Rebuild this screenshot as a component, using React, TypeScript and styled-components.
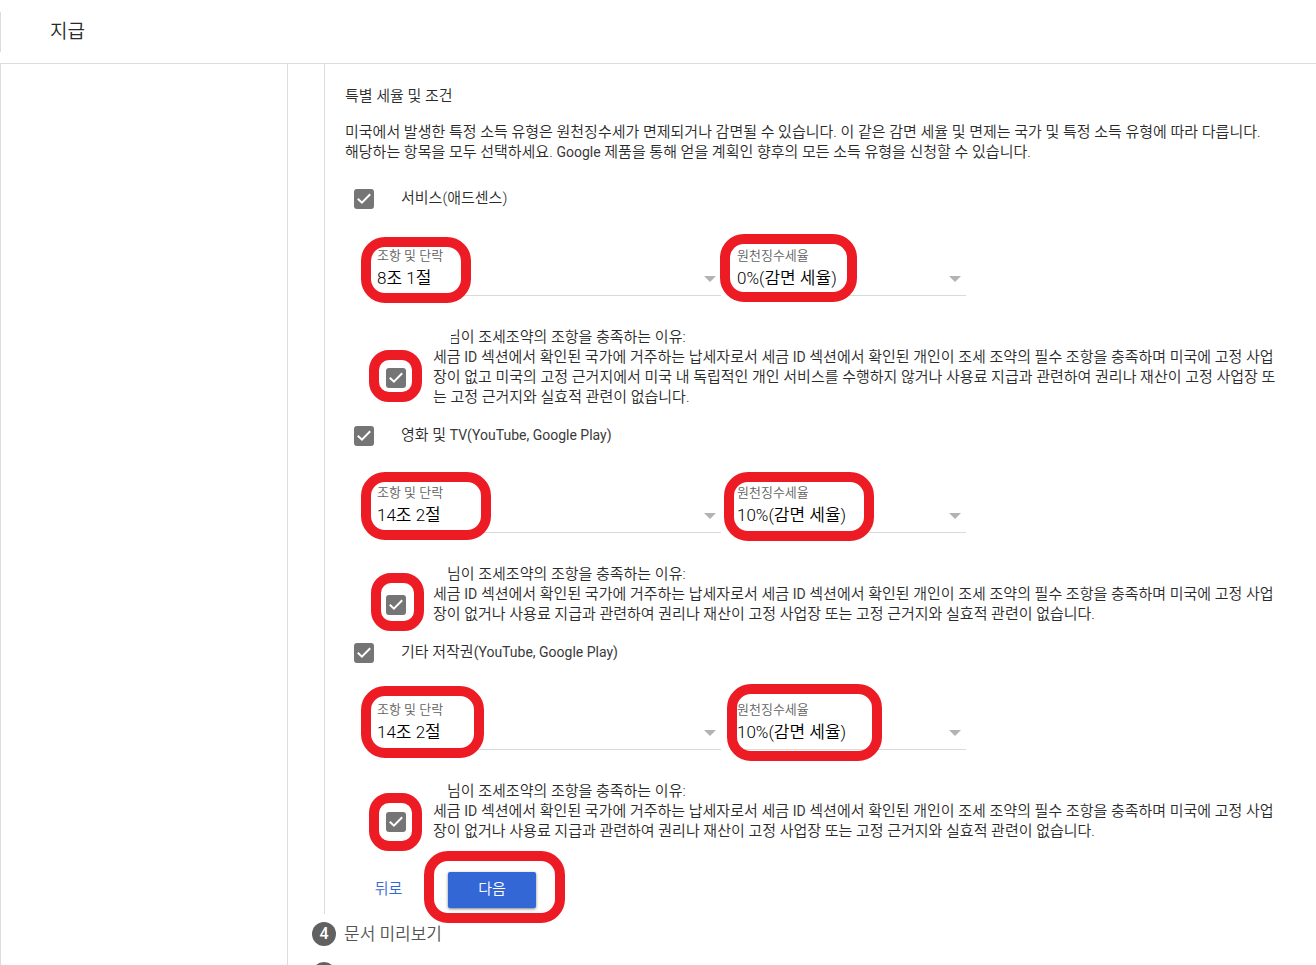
import React, { useId } from "react";
import styled, { createGlobalStyle } from "styled-components";

const GlobalStyle = createGlobalStyle`
  *, *::before, *::after { box-sizing: border-box; }
  body {
    margin: 0;
    background: #fff;
    color: #2a2a2a;
    font-family: Roboto, "Noto Sans CJK KR", sans-serif;
    font-size: 15px;
    line-height: 20px;
    font-weight: 350;
  }
  button, select, input { font-family: inherit; font-weight: inherit; margin: 0; }
`;

const Page = styled.div`
  display: flex;
  flex-direction: column;
  height: 100vh;
  overflow: hidden;
`;

const Header = styled.header`
  flex: none;
  padding: 12px 0 11px;
  border-bottom: 1px solid #dadce0;
`;

const PageTitle = styled.h1`
  margin: 0;
  padding-left: 49px;
  border-left: 1px solid #dadce0;
  font-size: 19px;
  font-weight: inherit;
  line-height: 40px;
`;

const Body = styled.div`
  flex: 1;
  display: flex;
  min-height: 0;
`;

const Sidebar = styled.aside`
  flex: none;
  width: 288px;
  border: solid #dadce0;
  border-width: 0 1px;
`;

const Main = styled.main`
  flex: 1;
  min-width: 0;
  padding: 0 32px 0 24px;
`;

const StepContent = styled.section`
  margin-left: 12px;
  padding: 22px 0 6px 20px;
  border-left: 1px solid #dadce0;
`;

const Heading = styled.h2`
  margin: 0;
  font-size: 15px;
  font-weight: inherit;
`;

const Intro = styled.p`
  margin: 16px 0 27px;
`;

const Latin = styled.span`
  color: #3a3a3a;
  font-size: 14px;
  font-weight: 400;
`;

const IncomeGroup = styled.section`
  margin-bottom: 19px;
`;

const IncomeRow = styled.div`
  display: flex;
  gap: 27px;
  padding-left: 9px;
  line-height: 18px;
`;

const Fields = styled.div`
  display: flex;
  gap: 16px;
  margin: 38px 0 31px 32px;
`;

const FieldBox = styled.div<{ $width: number }>`
  position: relative;
  flex: 0 1 ${(p) => p.$width}px;
`;

const FieldLabel = styled.label`
  display: block;
  font-size: 13px;
  line-height: 18px;
  color: #616161;
`;

const Select = styled.select`
  display: block;
  appearance: none;
  width: 100%;
  height: 31px;
  padding: 0 24px 4px 0;
  border: 0;
  border-bottom: 1px solid #dadada;
  border-radius: 0;
  background: transparent;
  color: #000;
  font-size: 17px;
`;

const Arrow = styled.svg`
  position: absolute;
  right: 5px;
  bottom: 14px;
  width: 12px;
  height: 6px;
  fill: #b3b3b3;
  pointer-events: none;
`;

const ReasonRow = styled.div`
  display: flex;
  align-items: center;
  gap: 27px;
  padding-left: 41px;
`;

const ReasonText = styled.label`
  flex: 1;
`;

const NameLine = styled.span`
  display: block;
  padding-left: 14px;
`;

const Suffix = styled.span<{ $cut?: boolean }>`
  display: inline-block;
  clip-path: ${(p) => (p.$cut ? "inset(0 0 0 4px)" : "none")};
`;

const CheckWrap = styled.span<{ $low?: boolean }>`
  position: relative;
  flex: none;
  width: 20px;
  height: 20px;
  margin-top: ${(p) => (p.$low ? "22px" : "0")};
`;

const CheckInput = styled.input`
  appearance: none;
  display: block;
  width: 20px;
  height: 20px;
  border: 2px solid #757575;
  border-radius: 3px;
  &:checked { background: #757575; }
`;

const Tick = styled.svg`
  position: absolute;
  inset: 0;
  width: 20px;
  height: 20px;
  fill: none;
  stroke: #fff;
  stroke-width: 2;
  pointer-events: none;
  input:not(:checked) + & { display: none; }
`;

type RingBox = [number, number, number, number];

const Ring = styled.span<{ $box: RingBox }>`
  position: absolute;
  z-index: 1;
  left: ${(p) => p.$box[0]}px;
  top: ${(p) => p.$box[1]}px;
  width: ${(p) => p.$box[2]}px;
  height: ${(p) => p.$box[3]}px;
  border: 10px solid #ed1c24;
  border-radius: ${(p) => (p.$box[2] < 60 ? 20 : 24)}px;
  pointer-events: none;
`;

const Actions = styled.div`
  display: flex;
  gap: 31px;
  margin-top: 31px;
  padding-left: 15px;
`;

const ButtonWrap = styled.span`
  position: relative;
`;

const Button = styled.button<{ $primary?: boolean }>`
  width: ${(p) => (p.$primary ? 88 : 57)}px;
  height: 36px;
  padding: 0 0 5px;
  border: 0;
  border-radius: 2px;
  font-size: 15px;
  background: ${(p) => (p.$primary ? "#3367d6" : "transparent")};
  color: ${(p) => (p.$primary ? "#fff" : "#3367d6")};
  box-shadow: ${(p) => (p.$primary ? "0 1px 3px rgba(0, 0, 0, 0.5)" : "none")};
`;

const Steps = styled.ol`
  list-style: none;
  margin: 8px 0 0;
  padding: 0;
  display: grid;
  gap: 16px;
`;

const Step = styled.li`
  display: flex;
  gap: 8px;
  color: #545454;
  font-size: 17px;
  line-height: 24px;
`;

const StepNumber = styled.span`
  width: 24px;
  height: 24px;
  border-radius: 50%;
  background: #616161;
  color: #fff;
  font-size: 16px;
  font-weight: 500;
  text-align: center;
`;

function Checkbox({ id, low, ring }: { id: string; low?: boolean; ring?: RingBox }) {
  return (
    <CheckWrap $low={low}>
      <CheckInput type="checkbox" id={id} defaultChecked />
      <Tick viewBox="0 0 20 20" aria-hidden="true">
        <path d="M3.8 9.8 7.9 13.7 16.2 5.2" />
      </Tick>
      {ring && <Ring $box={ring} />}
    </CheckWrap>
  );
}

function Field({ label, value, width, ring }: { label: string; value: string; width: number; ring: RingBox }) {
  const id = useId();
  return (
    <FieldBox $width={width}>
      <FieldLabel htmlFor={id}>{label}</FieldLabel>
      <Select id={id} defaultValue={value}>
        <option>{value}</option>
      </Select>
      <Arrow viewBox="0 0 12 6" aria-hidden="true">
        <path d="M0 0H12L6 6Z" />
      </Arrow>
      <Ring $box={ring} />
    </FieldBox>
  );
}

interface Income {
  name: React.ReactNode;
  article: string;
  rate: string;
  reason: string;
  cut?: boolean;
  rings: [RingBox, RingBox, RingBox];
}

const incomes: Income[] = [
  {
    name: "서비스(애드센스)",
    article: "8조 1절",
    rate: "0%(감면 세율)",
    reason:
      "장이 없고 미국의 고정 근거지에서 미국 내 독립적인 개인 서비스를 수행하지 않거나 사용료 지급과 관련하여 권리나 재산이 고정 사업장 또는 고정 근거지와 실효적 관련이 없습니다.",
    cut: true,
    rings: [[-16, -10, 110, 66], [-17, -13, 137, 68], [-17, -18, 53, 52]],
  },
  {
    name: <>영화 및 <Latin>TV(YouTube, Google Play)</Latin></>,
    article: "14조 2절",
    rate: "10%(감면 세율)",
    reason:
      "장이 없거나 사용료 지급과 관련하여 권리나 재산이 고정 사업장 또는 고정 근거지와 실효적 관련이 없습니다.",
    rings: [[-16, -12, 130, 68], [-13, -12, 150, 69], [-15, -22, 53, 58]],
  },
  {
    name: <>기타 저작권<Latin>(YouTube, Google Play)</Latin></>,
    article: "14조 2절",
    rate: "10%(감면 세율)",
    reason:
      "장이 없거나 사용료 지급과 관련하여 권리나 재산이 고정 사업장 또는 고정 근거지와 실효적 관련이 없습니다.",
    rings: [[-16, -15, 123, 72], [-10, -17, 155, 77], [-17, -19, 53, 58]],
  },
];

function IncomeType({ income }: { income: Income }) {
  const id = useId();
  return (
    <IncomeGroup>
      <IncomeRow>
        <Checkbox id={id + "type"} />
        <label htmlFor={id + "type"}>{income.name}</label>
      </IncomeRow>
      <Fields>
        <Field label="조항 및 단락" value={income.article} width={344} ring={income.rings[0]} />
        <Field label="원천징수세율" value={income.rate} width={229} ring={income.rings[1]} />
      </Fields>
      <ReasonRow>
        <Checkbox id={id + "reason"} low ring={income.rings[2]} />
        <ReasonText htmlFor={id + "reason"}>
          <NameLine>
            <Suffix $cut={income.cut}>님이</Suffix> 조세조약의 조항을 충족하는 이유:
          </NameLine>
          세금 <Latin>ID</Latin> 섹션에서 확인된 국가에 거주하는 납세자로서 세금 <Latin>ID</Latin> 섹션에서 확인된
          개인이 조세 조약의 필수 조항을 충족하며 미국에 고정 사업{income.reason}
        </ReasonText>
      </ReasonRow>
    </IncomeGroup>
  );
}

export default function App() {
  return (
    <Page>
      <GlobalStyle />
      <Header>
        <PageTitle>지급</PageTitle>
      </Header>
      <Body>
        <Sidebar />
        <Main>
          <StepContent>
            <Heading>특별 세율 및 조건</Heading>
            <Intro>
              미국에서 발생한 특정 소득 유형은 원천징수세가 면제되거나 감면될 수 있습니다. 이 같은 감면 세율 및 면제는
              국가 및 특정 소득 유형에 따라 다릅니다.
              <br />
              해당하는 항목을 모두 선택하세요. <Latin>Google</Latin> 제품을 통해 얻을 계획인 향후의 모든 소득 유형을
              신청할 수 있습니다.
            </Intro>
            {incomes.map((income, i) => (
              <IncomeType key={i} income={income} />
            ))}
            <Actions>
              <ButtonWrap>
                <Button type="button">뒤로</Button>
              </ButtonWrap>
              <ButtonWrap>
                <Button type="button" $primary>다음</Button>
                <Ring $box={[-24, -21, 141, 72]} />
              </ButtonWrap>
            </Actions>
          </StepContent>
          <Steps>
            <Step>
              <StepNumber>4</StepNumber>
              문서 미리보기
            </Step>
            <Step>
              <StepNumber />
            </Step>
          </Steps>
        </Main>
      </Body>
    </Page>
  );
}
